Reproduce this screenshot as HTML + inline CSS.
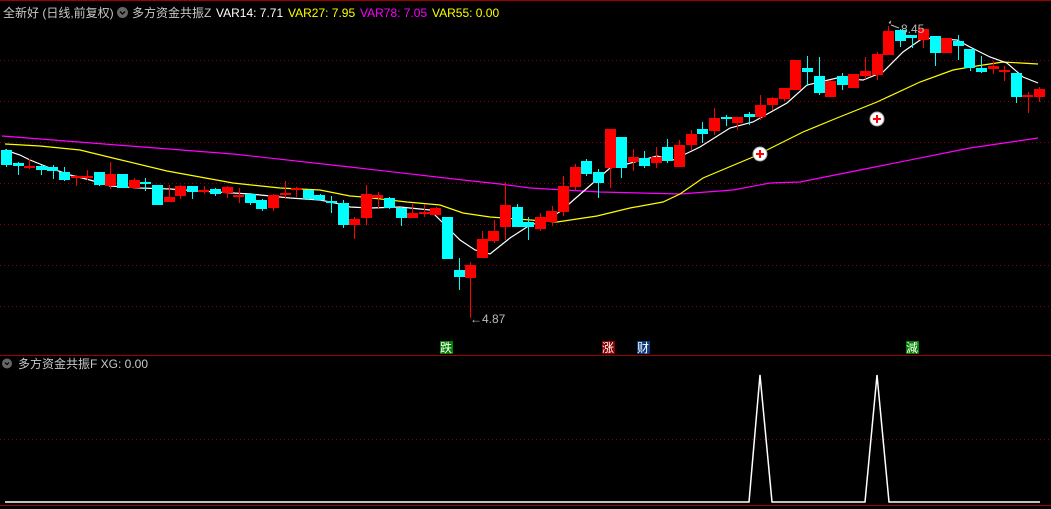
<!DOCTYPE html>
<html><head><meta charset="utf-8"><style>
html,body{margin:0;padding:0;background:#000;width:1051px;height:509px;overflow:hidden}
svg{display:block}
text{font-family:"Liberation Sans","Noto Sans CJK SC",sans-serif;font-size:12px}
</style></head><body>
<svg width="1051" height="509" viewBox="0 0 1051 509" xmlns="http://www.w3.org/2000/svg">
<rect width="1051" height="509" fill="#000"/>
<line x1="0" y1="0.5" x2="1051" y2="0.5" stroke="#a00000"/>
<g stroke="#900000" stroke-dasharray="1 3" stroke-width="1">
<line x1="0" y1="60.5" x2="1051" y2="60.5"/><line x1="0" y1="101.5" x2="1051" y2="101.5"/>
<line x1="0" y1="142.5" x2="1051" y2="142.5"/><line x1="0" y1="183.5" x2="1051" y2="183.5"/>
<line x1="0" y1="224.5" x2="1051" y2="224.5"/><line x1="0" y1="265.5" x2="1051" y2="265.5"/>
<line x1="0" y1="306.5" x2="1051" y2="306.5"/><line x1="0" y1="439.5" x2="1051" y2="439.5"/>
</g>
<!-- header -->
<text x="3" y="17" fill="#c8c8c8">全新好 (日线,前复权)</text>
<circle cx="122.5" cy="12.5" r="5.5" fill="#666"/><path d="M120 11.5l2.5 2.5 2.5-2.5" stroke="#000" stroke-width="1.3" fill="none"/>
<text x="132" y="17" fill="#c8c8c8">多方资金共振Z</text>
<text x="216" y="17" fill="#fff">VAR14: 7.71</text>
<text x="288" y="17" fill="#ffff00">VAR27: 7.95</text>
<text x="360" y="17" fill="#ff00ff">VAR78: 7.05</text>
<text x="432" y="17" fill="#ffff00">VAR55: 0.00</text>
<!-- MA lines -->
<polyline fill="none" stroke="#ff00ff" stroke-width="1.2" points="2,136 117,145 233,154 350,167 463,180 500,184 530,188 600,192 640,193 680,194 733,190 770,183 800,182 870,168 970,148 1038,138"/>
<polyline fill="none" stroke="#ffff00" stroke-width="1.2" points="5,144 40,146 80,150 117,159 167,171 233,183 280,188 320,190 350,196 363,197 407,202 440,205 463,213 490,217 517,219 557,222 597,216 630,208 663,202 680,194 703,178 753,157 803,132 837,118 877,102 920,82 953,70 970,67 1003,62 1038,64"/>
<polyline fill="none" stroke="#ffffff" stroke-width="1.2" points="5,150 20,155 30,160 50,168 70,175 90,180 110,186 140,188 170,189 200,191 250,194 290,198 320,200 340,204 350,207 370,208 400,207 430,210 445,225 460,240 475,250 490,254 510,238 530,225 545,221 561,211 585,190 610,168 627,164 657,156 673,160 700,147 730,128 753,122 787,103 807,85 837,78 863,80 883,72 903,52 923,38 957,40 970,47 990,57 1007,63 1023,77 1038,83"/>
<!-- candles -->
<g id="c">
<g stroke="#00ffff" fill="#00ffff">
<line x1="6.5" y1="149" x2="6.5" y2="167"/><rect x="1" y="150" width="11" height="15" stroke="none"/>
<line x1="18.5" y1="162" x2="18.5" y2="175"/><rect x="13" y="163" width="11" height="3" stroke="none"/>
<line x1="41.5" y1="165" x2="41.5" y2="175"/><rect x="36" y="166" width="11" height="4" stroke="none"/>
<line x1="53.5" y1="165" x2="53.5" y2="179"/><rect x="47" y="167" width="11" height="4" stroke="none"/>
<line x1="64.5" y1="167" x2="64.5" y2="181"/><rect x="59" y="172" width="11" height="8" stroke="none"/>
<line x1="99.5" y1="172" x2="99.5" y2="186"/><rect x="94" y="172" width="11" height="13" stroke="none"/>
<rect x="117" y="174" width="11" height="14" stroke="none"/>
<line x1="145.5" y1="178" x2="145.5" y2="191"/><rect x="140" y="182" width="11" height="2" stroke="none"/>
<rect x="152" y="185" width="11" height="20" stroke="none"/>
<line x1="192.5" y1="186" x2="192.5" y2="199"/><rect x="187" y="186" width="11" height="6" stroke="none"/>
<line x1="215.5" y1="188" x2="215.5" y2="196"/><rect x="210" y="189" width="11" height="5" stroke="none"/>
<line x1="250.5" y1="193" x2="250.5" y2="205"/><rect x="245" y="194" width="11" height="9" stroke="none"/>
<line x1="262.5" y1="199" x2="262.5" y2="211"/><rect x="256" y="200" width="11" height="9" stroke="none"/>
<line x1="308.5" y1="189" x2="308.5" y2="200"/><rect x="303" y="190" width="11" height="9" stroke="none"/>
<line x1="320.5" y1="194" x2="320.5" y2="201"/><rect x="314" y="195" width="11" height="5" stroke="none"/>
<line x1="331.5" y1="196" x2="331.5" y2="213"/><rect x="326" y="201" width="11" height="2" stroke="none"/>
<line x1="343.5" y1="200" x2="343.5" y2="228"/><rect x="338" y="203" width="11" height="22" stroke="none"/>
<line x1="389.5" y1="197" x2="389.5" y2="209"/><rect x="384" y="198" width="11" height="10" stroke="none"/>
<line x1="401.5" y1="207" x2="401.5" y2="226"/><rect x="396" y="208" width="11" height="10" stroke="none"/>
<rect x="442" y="217" width="11" height="42" stroke="none"/>
<line x1="459.5" y1="258" x2="459.5" y2="290"/><rect x="454" y="270" width="11" height="7" stroke="none"/>
<line x1="517.5" y1="204" x2="517.5" y2="227"/><rect x="512" y="207" width="11" height="20" stroke="none"/>
<line x1="528.5" y1="217" x2="528.5" y2="240"/><rect x="523" y="222" width="11" height="5" stroke="none"/>
<line x1="586.5" y1="159" x2="586.5" y2="176"/><rect x="581" y="161" width="11" height="13" stroke="none"/>
<line x1="598.5" y1="169" x2="598.5" y2="198"/><rect x="593" y="172" width="11" height="11" stroke="none"/>
<line x1="621.5" y1="137" x2="621.5" y2="178"/><rect x="616" y="137" width="11" height="31" stroke="none"/>
<line x1="644.5" y1="151" x2="644.5" y2="168"/><rect x="639" y="158" width="11" height="8" stroke="none"/>
<line x1="667.5" y1="139" x2="667.5" y2="163"/><rect x="662" y="147" width="11" height="14" stroke="none"/>
<line x1="702.5" y1="122" x2="702.5" y2="143"/><rect x="697" y="129" width="11" height="5" stroke="none"/>
<line x1="726.5" y1="115" x2="726.5" y2="126"/><rect x="721" y="117" width="11" height="2" stroke="none"/>
<line x1="749.5" y1="112" x2="749.5" y2="125"/><rect x="744" y="114" width="11" height="3" stroke="none"/>
<line x1="807.5" y1="56" x2="807.5" y2="86"/><rect x="802" y="68" width="11" height="4" stroke="none"/>
<line x1="819.5" y1="57" x2="819.5" y2="95"/><rect x="814" y="76" width="11" height="17" stroke="none"/>
<line x1="842.5" y1="73" x2="842.5" y2="90"/><rect x="837" y="76" width="11" height="9" stroke="none"/>
<line x1="900.5" y1="29" x2="900.5" y2="47"/><rect x="895" y="30" width="11" height="11" stroke="none"/>
<line x1="912.5" y1="35" x2="912.5" y2="48"/><rect x="906" y="35" width="11" height="3" stroke="none"/>
<line x1="935.5" y1="36" x2="935.5" y2="66"/><rect x="930" y="36" width="11" height="17" stroke="none"/>
<line x1="958.5" y1="35" x2="958.5" y2="60"/><rect x="953" y="41" width="11" height="5" stroke="none"/>
<line x1="970.5" y1="49" x2="970.5" y2="71"/><rect x="964" y="49" width="11" height="19" stroke="none"/>
<line x1="981.5" y1="56" x2="981.5" y2="73"/><rect x="976" y="68" width="11" height="4" stroke="none"/>
<line x1="1016.5" y1="73" x2="1016.5" y2="103"/><rect x="1011" y="73" width="11" height="24" stroke="none"/>
</g>
<g stroke="#ff0000" fill="#ff0000">
<line x1="29.5" y1="159" x2="29.5" y2="169"/><rect x="24" y="166" width="11" height="2" stroke="none"/>
<line x1="76.5" y1="175" x2="76.5" y2="186"/><rect x="71" y="176" width="11" height="2" stroke="none"/>
<line x1="87.5" y1="170" x2="87.5" y2="180"/><rect x="82" y="176" width="11" height="2" stroke="none"/>
<line x1="110.5" y1="162" x2="110.5" y2="189"/><rect x="105" y="174" width="11" height="12" stroke="none"/>
<line x1="134.5" y1="178" x2="134.5" y2="189"/><rect x="129" y="180" width="11" height="8" stroke="none"/>
<line x1="169.5" y1="185" x2="169.5" y2="202"/><rect x="164" y="197" width="11" height="5" stroke="none"/>
<line x1="180.5" y1="185" x2="180.5" y2="199"/><rect x="175" y="186" width="11" height="10" stroke="none"/>
<line x1="204.5" y1="186" x2="204.5" y2="194"/><rect x="198" y="190" width="11" height="2" stroke="none"/>
<line x1="227.5" y1="186" x2="227.5" y2="198"/><rect x="222" y="187" width="11" height="6" stroke="none"/>
<line x1="239.5" y1="188" x2="239.5" y2="203"/><rect x="233" y="195" width="11" height="2" stroke="none"/>
<line x1="273.5" y1="194" x2="273.5" y2="211"/><rect x="268" y="195" width="11" height="13" stroke="none"/>
<line x1="285.5" y1="181" x2="285.5" y2="199"/><rect x="280" y="193" width="11" height="2" stroke="none"/>
<line x1="296.5" y1="187" x2="296.5" y2="197"/><rect x="291" y="188" width="11" height="2" stroke="none"/>
<line x1="354.5" y1="217" x2="354.5" y2="239"/><rect x="349" y="219" width="11" height="6" stroke="none"/>
<line x1="366.5" y1="185" x2="366.5" y2="225"/><rect x="361" y="194" width="11" height="24" stroke="none"/>
<line x1="378.5" y1="192" x2="378.5" y2="208"/><rect x="372" y="195" width="11" height="3" stroke="none"/>
<line x1="412.5" y1="204" x2="412.5" y2="218"/><rect x="407" y="213" width="11" height="5" stroke="none"/>
<line x1="424.5" y1="204" x2="424.5" y2="217"/><rect x="419" y="212" width="11" height="2" stroke="none"/>
<line x1="436.5" y1="207" x2="436.5" y2="216"/><rect x="430" y="208" width="11" height="7" stroke="none"/>
<line x1="470.5" y1="262" x2="470.5" y2="318"/><rect x="465" y="265" width="11" height="13" stroke="none"/>
<line x1="482.5" y1="231" x2="482.5" y2="258"/><rect x="477" y="239" width="11" height="19" stroke="none"/>
<line x1="494.5" y1="220" x2="494.5" y2="243"/><rect x="488" y="231" width="11" height="10" stroke="none"/>
<line x1="505.5" y1="182" x2="505.5" y2="240"/><rect x="500" y="205" width="11" height="22" stroke="none"/>
<line x1="540.5" y1="213" x2="540.5" y2="231"/><rect x="535" y="217" width="11" height="12" stroke="none"/>
<line x1="552.5" y1="206" x2="552.5" y2="226"/><rect x="546" y="211" width="11" height="11" stroke="none"/>
<line x1="563.5" y1="176" x2="563.5" y2="216"/><rect x="558" y="186" width="11" height="26" stroke="none"/>
<line x1="575.5" y1="164" x2="575.5" y2="190"/><rect x="570" y="167" width="11" height="20" stroke="none"/>
<line x1="610.5" y1="129" x2="610.5" y2="188"/><rect x="605" y="129" width="11" height="39" stroke="none"/>
<line x1="633.5" y1="149" x2="633.5" y2="171"/><rect x="628" y="157" width="11" height="5" stroke="none"/>
<line x1="656.5" y1="147" x2="656.5" y2="168"/><rect x="651" y="157" width="11" height="6" stroke="none"/>
<line x1="679.5" y1="140" x2="679.5" y2="167"/><rect x="674" y="145" width="11" height="22" stroke="none"/>
<line x1="691.5" y1="130" x2="691.5" y2="150"/><rect x="686" y="134" width="11" height="11" stroke="none"/>
<line x1="714.5" y1="108" x2="714.5" y2="135"/><rect x="709" y="118" width="11" height="13" stroke="none"/>
<line x1="737.5" y1="117" x2="737.5" y2="130"/><rect x="732" y="117" width="11" height="6" stroke="none"/>
<line x1="760.5" y1="95" x2="760.5" y2="120"/><rect x="755" y="105" width="11" height="12" stroke="none"/>
<line x1="772.5" y1="97" x2="772.5" y2="110"/><rect x="767" y="98" width="11" height="7" stroke="none"/>
<line x1="784.5" y1="88" x2="784.5" y2="101"/><rect x="779" y="88" width="11" height="11" stroke="none"/>
<rect x="790" y="60" width="11" height="30" stroke="none"/>
<line x1="830.5" y1="80" x2="830.5" y2="97"/><rect x="825" y="81" width="11" height="16" stroke="none"/>
<rect x="848" y="74" width="11" height="14" stroke="none"/>
<line x1="865.5" y1="57" x2="865.5" y2="79"/><rect x="860" y="71" width="11" height="5" stroke="none"/>
<line x1="877.5" y1="52" x2="877.5" y2="80"/><rect x="872" y="54" width="11" height="21" stroke="none"/>
<line x1="888.5" y1="26" x2="888.5" y2="55"/><rect x="883" y="31" width="11" height="24" stroke="none"/>
<line x1="923.5" y1="28" x2="923.5" y2="48"/><rect x="918" y="29" width="11" height="11" stroke="none"/>
<rect x="941" y="38" width="11" height="15" stroke="none"/>
<line x1="993.5" y1="61" x2="993.5" y2="74"/><rect x="988" y="66" width="11" height="3" stroke="none"/>
<line x1="1004.5" y1="66" x2="1004.5" y2="81"/><rect x="999" y="70" width="11" height="2" stroke="none"/>
<line x1="1028.5" y1="92" x2="1028.5" y2="113"/><rect x="1022" y="95" width="11" height="2" stroke="none"/>
<line x1="1039.5" y1="87" x2="1039.5" y2="102"/><rect x="1034" y="89" width="11" height="8" stroke="none"/>
</g>
</g>
<!-- markers -->
<g>
<circle cx="760" cy="154" r="7" fill="#fff" stroke="#aaa"/><path d="M756 154h8M760 150v8" stroke="#ff0000" stroke-width="2"/>
<circle cx="877" cy="119" r="7" fill="#fff" stroke="#aaa"/><path d="M873 119h8M877 115v8" stroke="#ff0000" stroke-width="2"/>
</g>
<text x="470" y="323" fill="#bbb" font-size="11">←4.87</text>
<path d="M889 23l2 -2M889 23h2M891 25l8 3" stroke="#bbb" fill="none"/>
<text x="901" y="33" fill="#bbb" font-size="11">8.45</text>
<!-- signal labels -->
<rect x="440" y="341" width="13" height="13" fill="#008000"/><text x="440" y="352" fill="#fff" font-size="12">跌</text>
<rect x="602" y="341" width="13" height="13" fill="#8b0000"/><text x="602" y="352" fill="#fff" font-size="12">涨</text>
<rect x="637" y="341" width="13" height="13" fill="#0a3a7a"/><text x="637" y="352" fill="#fff" font-size="12">财</text>
<rect x="906" y="341" width="13" height="13" fill="#008000"/><text x="906" y="352" fill="#fff" font-size="12">減</text>
<line x1="0" y1="355.5" x2="1051" y2="355.5" stroke="#a00000"/>
<!-- lower pane -->
<circle cx="7" cy="363.5" r="5" fill="#666"/><path d="M5 362.5l2 2 2-2" stroke="#000" stroke-width="1.2" fill="none"/>
<text x="18" y="368" fill="#c8c8c8">多方资金共振F  XG: 0.00</text>
<polyline fill="none" stroke="#fff" stroke-width="1.5" points="5,502 749,502 760,375 772,502 865,502 877,375 889,502 1040,502"/>
<line x1="0" y1="505.5" x2="1051" y2="505.5" stroke="#a00000"/>
</svg>
</body></html>
